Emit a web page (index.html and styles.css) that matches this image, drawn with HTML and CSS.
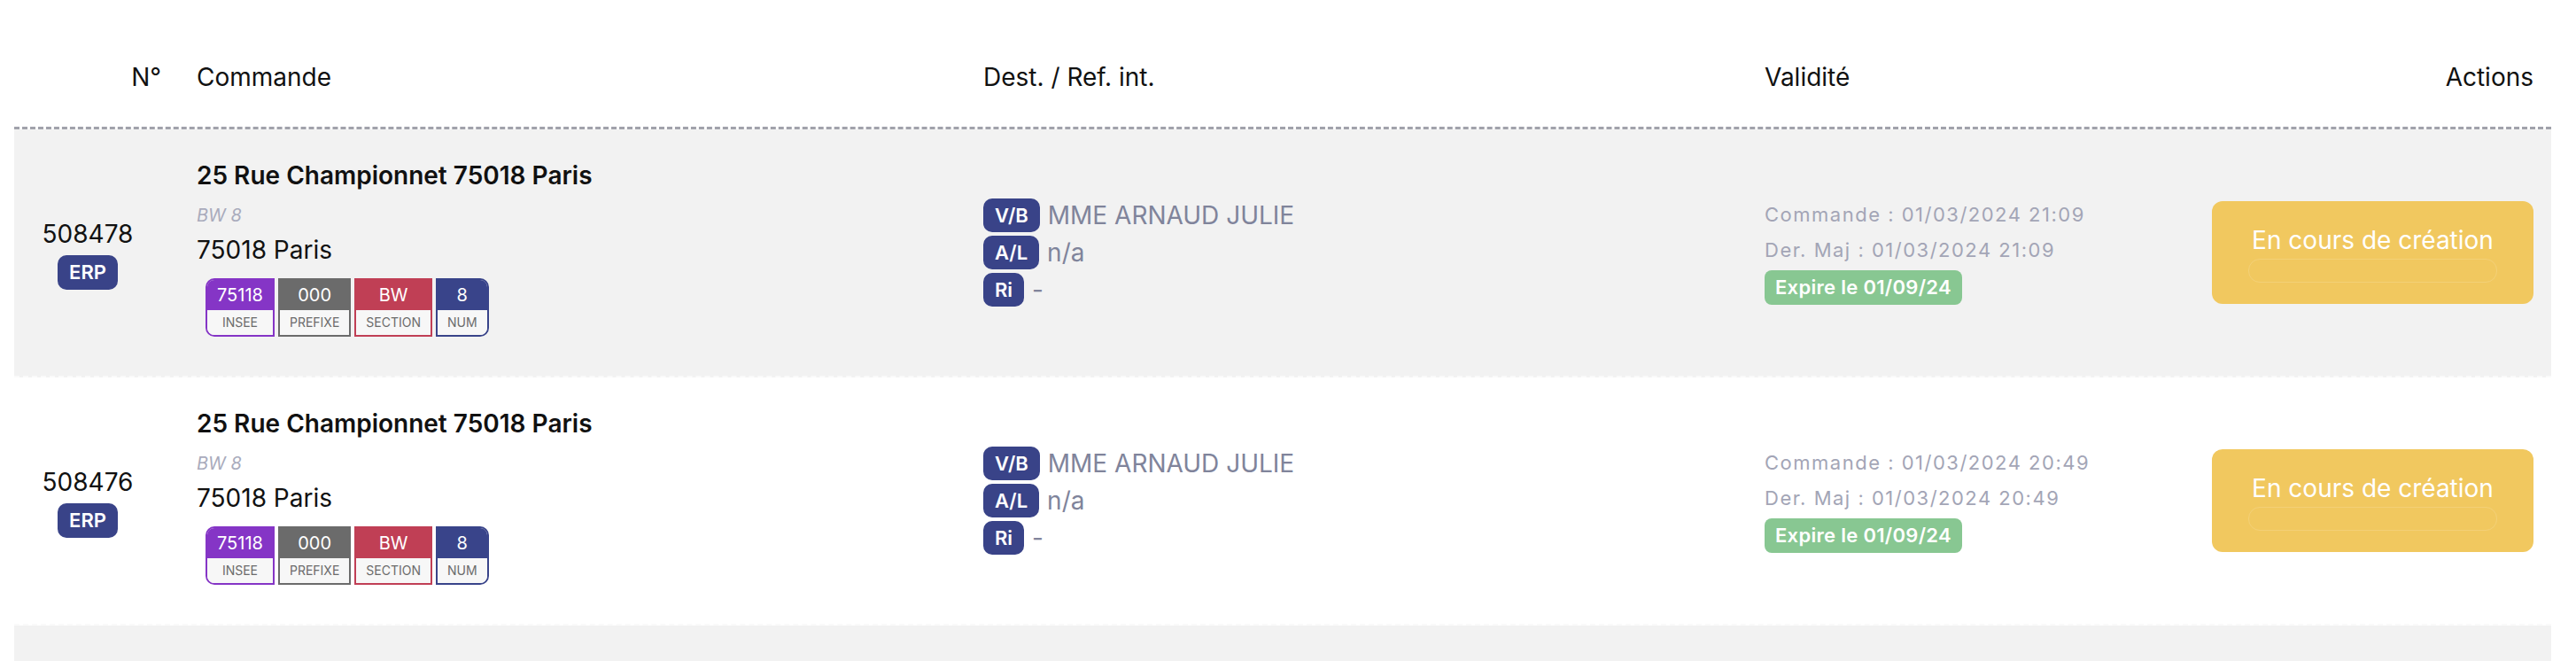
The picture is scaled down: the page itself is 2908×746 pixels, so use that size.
FILE: index.html
```html
<!DOCTYPE html>
<html lang="fr">
<head>
    <meta charset="UTF-8">
    <meta name="viewport" content="width=device-width, initial-scale=1.0">
    <title>Commandes</title>
    <link rel="stylesheet" href="styles.css">
</head>
<body>
    <div class="orders">
        <div class="orders-head">
            <div class="col-num">N°</div>
            <div>Commande</div>
            <div>Dest. / Ref. int.</div>
            <div>Validité</div>
            <div class="col-actions">Actions</div>
        </div>

        <div class="order-row striped">
            <div class="col-num">
                <span class="num">508478</span>
                <span class="badge">ERP</span>
            </div>
            <div class="col-order">
                <div class="address">25 Rue Championnet 75018 Paris</div>
                <div class="parcel">BW 8</div>
                <div class="city">75018 Paris</div>
                <div class="cadastre">
                    <div class="tag tag-insee"><span class="tag-value">75118</span><span class="tag-label">INSEE</span></div>
                    <div class="tag tag-prefix"><span class="tag-value">000</span><span class="tag-label">PREFIXE</span></div>
                    <div class="tag tag-section"><span class="tag-value">BW</span><span class="tag-label">SECTION</span></div>
                    <div class="tag tag-num"><span class="tag-value">8</span><span class="tag-label">NUM</span></div>
                </div>
            </div>
            <div class="col-dest">
                <div class="dest-line"><span class="badge">V/B</span><span class="dest-value">MME ARNAUD JULIE</span></div>
                <div class="dest-line"><span class="badge">A/L</span><span class="dest-value">n/a</span></div>
                <div class="dest-line"><span class="badge">Ri</span><span class="dest-value">-</span></div>
            </div>
            <div class="col-validity">
                <div class="date">Commande : 01/03/2024 21:09</div>
                <div class="date">Der. Maj : 01/03/2024 21:09</div>
                <span class="expire">Expire le 01/09/24</span>
            </div>
            <div class="col-actions">
                <button class="status">
                    <span>En cours de création</span>
                    <span class="status-track"></span>
                </button>
            </div>
        </div>

        <div class="order-row">
            <div class="col-num">
                <span class="num">508476</span>
                <span class="badge">ERP</span>
            </div>
            <div class="col-order">
                <div class="address">25 Rue Championnet 75018 Paris</div>
                <div class="parcel">BW 8</div>
                <div class="city">75018 Paris</div>
                <div class="cadastre">
                    <div class="tag tag-insee"><span class="tag-value">75118</span><span class="tag-label">INSEE</span></div>
                    <div class="tag tag-prefix"><span class="tag-value">000</span><span class="tag-label">PREFIXE</span></div>
                    <div class="tag tag-section"><span class="tag-value">BW</span><span class="tag-label">SECTION</span></div>
                    <div class="tag tag-num"><span class="tag-value">8</span><span class="tag-label">NUM</span></div>
                </div>
            </div>
            <div class="col-dest">
                <div class="dest-line"><span class="badge">V/B</span><span class="dest-value">MME ARNAUD JULIE</span></div>
                <div class="dest-line"><span class="badge">A/L</span><span class="dest-value">n/a</span></div>
                <div class="dest-line"><span class="badge">Ri</span><span class="dest-value">-</span></div>
            </div>
            <div class="col-validity">
                <div class="date">Commande : 01/03/2024 20:49</div>
                <div class="date">Der. Maj : 01/03/2024 20:49</div>
                <span class="expire">Expire le 01/09/24</span>
            </div>
            <div class="col-actions">
                <button class="status">
                    <span>En cours de création</span>
                    <span class="status-track"></span>
                </button>
            </div>
        </div>

        <div class="order-row striped">
            <div class="col-num"></div>
            <div class="col-order"><div class="spacer"></div></div>
            <div></div>
            <div></div>
            <div></div>
        </div>
    </div>
</body>
</html>
```

FILE: styles.css
```css
body {
    margin: 0;
    font-family: Inter, 'Liberation Sans', sans-serif;
    color: #111;
    background-color: #fff;
}
.orders {
    margin: 16px 28px 0 16px;
}
.orders-head,
.order-row {
    display: grid;
    grid-template-columns: 186px 888px 882px 505px 403px;
}
.orders-head {
    font-size: 28px;
    line-height: 40px;
    border-bottom: 3px dashed #a1a2ab;
}
.orders-head > div {
    padding: 51px 20px 36px;
}
.orders-head .col-num {
    padding-left: 0;
    text-align: right;
}
.orders-head .col-actions {
    text-align: right;
}
.order-row {
    border-bottom: 2px dashed #fafafa;
}
.order-row.striped {
    background-color: #f2f2f2;
}
.order-row > div {
    padding: 32px 20px;
    display: flex;
    flex-direction: column;
    justify-content: center;
}
.order-row .col-num {
    padding-left: 0;
    align-items: center;
}
.num {
    font-size: 28px;
    line-height: 40px;
}
.badge {
    display: inline-block;
    height: 38px;
    line-height: 38px;
    padding: 0 13px;
    border-radius: 10px;
    background-color: #394388;
    color: #fff;
    font-size: 22px;
    font-weight: 600;
}
.col-num .badge {
    margin-top: 4px;
    height: 39px;
    line-height: 39px;
}
.address {
    font-size: 28px;
    line-height: 40px;
    font-weight: 600;
}
.parcel {
    margin-top: 11px;
    font-size: 20px;
    line-height: 28px;
    font-style: italic;
    color: #a9abbc;
}
.city {
    margin-top: 5px;
    font-size: 28px;
    line-height: 40px;
}
.cadastre {
    display: flex;
    gap: 4px;
    margin: 12px 0 12px 10px;
}
.tag {
    display: flex;
    flex-direction: column;
    border: 2px solid;
    text-align: center;
    overflow: hidden;
}
.tag-value {
    height: 34px;
    line-height: 34px;
    padding: 0 11px;
    color: #fff;
    font-size: 20px;
}
.tag-label {
    height: 28px;
    line-height: 28px;
    padding: 0 11px;
    background-color: #f7f7f7;
    color: #6b6b6b;
    font-size: 14px;
}
.tag-insee {
    border-color: #8535c6;
    border-radius: 10px 0 0 10px;
}
.tag-insee .tag-value {
    background-color: #8535c6;
}
.tag-prefix {
    border-color: #6b6b6b;
}
.tag-prefix .tag-value {
    background-color: #6b6b6b;
}
.tag-section {
    border-color: #c03f55;
}
.tag-section .tag-value {
    background-color: #c03f55;
}
.tag-num {
    border-color: #39448a;
    border-radius: 0 10px 10px 0;
}
.tag-num .tag-value {
    background-color: #39448a;
}
.dest-line {
    display: flex;
    align-items: center;
    gap: 9px;
}
.dest-line + .dest-line {
    margin-top: 4px;
}
.dest-value {
    font-size: 28px;
    color: #80849b;
}
.date {
    font-size: 22px;
    line-height: 32px;
    letter-spacing: 1.5px;
    color: #a3a5b6;
    margin-bottom: 8px;
}
.expire {
    align-self: flex-start;
    margin-top: -1px;
    height: 39px;
    line-height: 39px;
    padding: 0 12px;
    border-radius: 8px;
    background-color: #88c792;
    color: #fff;
    font-size: 22px;
    font-weight: 600;
    letter-spacing: 0.3px;
}
.status {
    display: flex;
    flex-direction: column;
    width: 100%;
    padding: 24px 41px;
    border: none;
    border-radius: 12px;
    background-color: #f1c85f;
    color: #fff;
    font-family: inherit;
    font-size: 28px;
    line-height: 40px;
    cursor: pointer;
}
.status-track {
    margin-top: 1px;
    height: 25px;
    border: 1px solid rgba(255, 255, 255, 0.15);
    border-radius: 13px;
}
.spacer {
    height: 214px;
}
```
